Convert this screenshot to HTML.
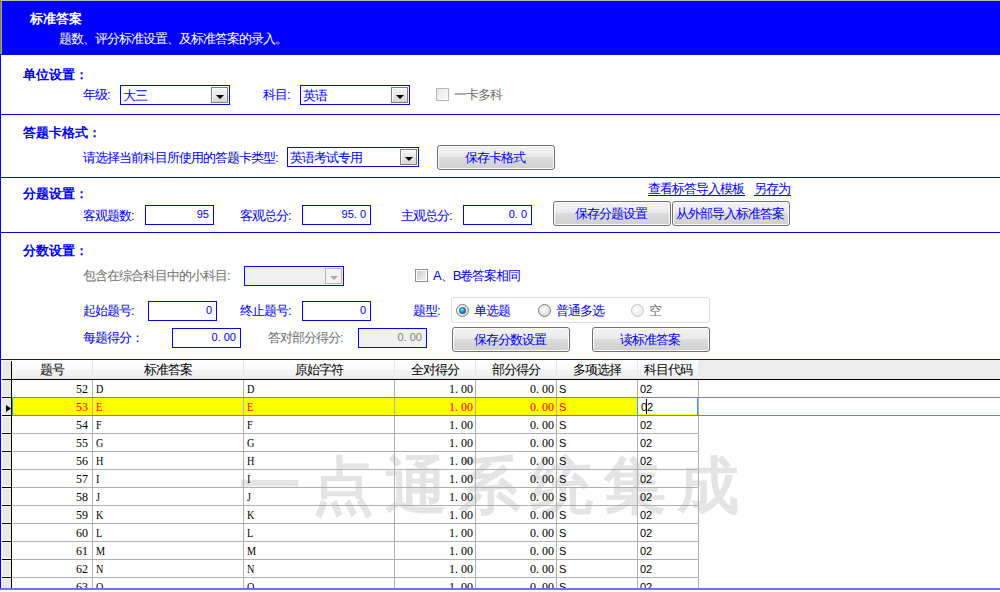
<!DOCTYPE html><html><head><meta charset="utf-8"><style>
html,body{margin:0;padding:0;background:#fff;}
body{width:1000px;height:592px;overflow:hidden;position:relative;font-family:"Liberation Sans",sans-serif;font-size:12px;}
div,span{position:absolute;}
.t{line-height:12px;white-space:nowrap;font-size:13px;letter-spacing:-1px;color:#0000ff;}
.b{line-height:12px;white-space:nowrap;font-size:13px;color:#0000ff;font-weight:bold;letter-spacing:0px;}
.g{line-height:12px;white-space:nowrap;font-size:13px;letter-spacing:-1px;color:#6d6d6d;}
.num{line-height:12px;white-space:nowrap;font-family:"Liberation Sans",sans-serif;font-size:11px;}
.num i{position:static;font-style:normal;letter-spacing:3px;}
.btn{box-sizing:border-box;border:1px solid #707070;border-radius:3px;background:linear-gradient(#f2f2f2 0%,#ebebeb 45%,#dddddd 50%,#cfcfcf 100%);box-shadow:inset 0 0 0 1px #fcfcfc;text-align:center;}
.btn span{position:static;display:block;line-height:12px;margin-top:6px;margin-left:-2px;color:#0000ff;white-space:nowrap;font-size:13px;letter-spacing:-1px;}
.gh{line-height:12px;white-space:nowrap;font-size:13px;letter-spacing:-1px;color:#000;text-align:center;}
.gd{line-height:12px;white-space:nowrap;font-family:"Liberation Serif",serif;font-size:12px;color:#000;}
.t,.g{margin-left:-1px;}
.b{margin-left:-1px;margin-top:1px;}
.gd i{position:static;font-style:normal;letter-spacing:3px;}
.gl{line-height:12px;white-space:nowrap;font-family:"Liberation Serif",serif;font-size:12px;color:#000;transform:scaleX(0.85);transform-origin:0 0;}
.gs{line-height:12px;white-space:nowrap;font-family:"Liberation Sans",sans-serif;font-size:11px;color:#000;}
</style></head><body>
<div style="left:0px;top:0px;width:1000px;height:1px;background:#bdbd9f"></div>
<div style="left:0px;top:0px;width:1px;height:54px;background:#7c7c6e"></div>
<div style="left:1px;top:1px;width:1px;height:53px;background:#a8a898"></div>
<div style="left:2px;top:1px;width:998px;height:54px;background:#0000ff"></div>
<div style="left:0px;top:54px;width:2px;height:1px;background:#0000ff"></div>
<div style="left:0px;top:54px;width:1px;height:535px;background:#0000ff"></div>
<div style="left:0px;top:114px;width:1000px;height:1px;background:#0000ff"></div>
<div style="left:0px;top:177px;width:1000px;height:1px;background:#0000ff"></div>
<div style="left:0px;top:232px;width:1000px;height:1px;background:#0000ff"></div>
<div style="left:0px;top:359px;width:1000px;height:1px;background:#0000ff"></div>
<span class="b" style="left:31px;top:12px;color:#fff">标准答案</span>
<span class="t" style="left:60px;top:33px;color:#fff">题数、评分标准设置、及标准答案的录入。</span>
<span class="b" style="left:24px;top:68px;">单位设置：</span>
<span class="t" style="left:84px;top:89px;">年级:</span>
<div style="left:120px;top:85px;width:110px;height:20px;border:1px solid #0000ff;box-sizing:border-box;background:#fff"></div>
<div style="left:211px;top:87px;width:17px;height:16px;border:1px solid #808080;box-sizing:border-box;background:linear-gradient(#f6f6f6,#d8d8d8);box-shadow:inset 1px 1px 0 #fff"></div>
<div style="left:216px;top:95px;width:0;height:0;border-left:4px solid transparent;border-right:4px solid transparent;border-top:4px solid #000"></div>
<span class="t" style="left:124px;top:90px;">大三</span>
<span class="t" style="left:264px;top:89px;">科目:</span>
<div style="left:300px;top:85px;width:110px;height:20px;border:1px solid #0000ff;box-sizing:border-box;background:#fff"></div>
<div style="left:391px;top:87px;width:17px;height:16px;border:1px solid #808080;box-sizing:border-box;background:linear-gradient(#f6f6f6,#d8d8d8);box-shadow:inset 1px 1px 0 #fff"></div>
<div style="left:396px;top:95px;width:0;height:0;border-left:4px solid transparent;border-right:4px solid transparent;border-top:4px solid #000"></div>
<span class="t" style="left:304px;top:90px;">英语</span>
<div style="left:436px;top:88px;width:13px;height:13px;border:1px solid #b8b8b8;box-sizing:border-box;background:linear-gradient(135deg,#e8e8e8,#fbfbfb)"></div>
<span class="g" style="left:455px;top:89px;">一卡多科</span>
<span class="b" style="left:24px;top:126px;">答题卡格式：</span>
<span class="t" style="left:84px;top:152px;">请选择当前科目所使用的答题卡类型:</span>
<div style="left:287px;top:147px;width:132px;height:20px;border:1px solid #0000ff;box-sizing:border-box;background:#fff"></div>
<div style="left:400px;top:149px;width:17px;height:16px;border:1px solid #808080;box-sizing:border-box;background:linear-gradient(#f6f6f6,#d8d8d8);box-shadow:inset 1px 1px 0 #fff"></div>
<div style="left:405px;top:157px;width:0;height:0;border-left:4px solid transparent;border-right:4px solid transparent;border-top:4px solid #000"></div>
<span class="t" style="left:291px;top:152px;">英语考试专用</span>
<div class="btn" style="left:437px;top:145px;width:118px;height:25px"><span>保存卡格式</span></div>
<span class="b" style="left:24px;top:187px;">分题设置：</span>
<span class="t" style="left:649px;top:183px">查看标答导入模板</span>
<span class="t" style="left:755px;top:183px">另存为</span>
<div style="left:648px;top:195px;width:97px;height:1px;background:#0000ff"></div>
<div style="left:754px;top:195px;width:37px;height:1px;background:#0000ff"></div>
<span class="t" style="left:84px;top:210px;">客观题数:</span>
<div style="left:145px;top:205px;width:69px;height:20px;border:1px solid #0000ff;box-sizing:border-box;background:#fff"></div>
<span class="num" style="left:145px;top:208px;width:64px;text-align:right;color:#0000ff">95</span>
<span class="t" style="left:241px;top:210px;">客观总分:</span>
<div style="left:302px;top:205px;width:69px;height:20px;border:1px solid #0000ff;box-sizing:border-box;background:#fff"></div>
<span class="num" style="left:302px;top:208px;width:64px;text-align:right;color:#0000ff">95<i>.</i>0</span>
<span class="t" style="left:402px;top:210px;">主观总分:</span>
<div style="left:463px;top:205px;width:69px;height:20px;border:1px solid #0000ff;box-sizing:border-box;background:#fff"></div>
<span class="num" style="left:463px;top:208px;width:64px;text-align:right;color:#0000ff">0<i>.</i>0</span>
<div class="btn" style="left:553px;top:201px;width:118px;height:25px"><span>保存分题设置</span></div>
<div class="btn" style="left:672px;top:201px;width:118px;height:25px"><span>从外部导入标准答案</span></div>
<span class="b" style="left:24px;top:244px;">分数设置：</span>
<span class="g" style="left:84px;top:270px;">包含在综合科目中的小科目:</span>
<div style="left:244px;top:266px;width:100px;height:20px;border:1px solid #0000ff;box-sizing:border-box;background:#f0f0f0"></div>
<div style="left:325px;top:268px;width:17px;height:16px;border:1px solid #b8b8b8;box-sizing:border-box;background:#f4f4f4"></div>
<div style="left:330px;top:276px;width:0;height:0;border-left:4px solid transparent;border-right:4px solid transparent;border-top:4px solid #a8a8a8"></div>
<div style="left:415px;top:269px;width:13px;height:13px;border:1px solid #8e8e8e;box-sizing:border-box;background:#fff"></div>
<div style="left:417px;top:271px;width:9px;height:9px;background:linear-gradient(135deg,#c8c8c8,#f6f6f6)"></div>
<span class="t" style="left:434px;top:270px;">A、B卷答案相同</span>
<span class="t" style="left:84px;top:305px;">起始题号:</span>
<div style="left:148px;top:301px;width:69px;height:20px;border:1px solid #0000ff;box-sizing:border-box;background:#fff"></div>
<span class="num" style="left:148px;top:304px;width:64px;text-align:right;color:#0000ff">0</span>
<span class="t" style="left:241px;top:305px;">终止题号:</span>
<div style="left:302px;top:301px;width:69px;height:20px;border:1px solid #0000ff;box-sizing:border-box;background:#fff"></div>
<span class="num" style="left:302px;top:304px;width:64px;text-align:right;color:#0000ff">0</span>
<span class="t" style="left:414px;top:305px;">题型:</span>
<div style="left:451px;top:297px;width:259px;height:26px;border:1px solid #d5dfe5;box-sizing:border-box;border-radius:3px"></div>
<div style="left:456px;top:304px;width:13px;height:13px;border:1px solid #7a7a7a;box-sizing:border-box;border-radius:50%;background:radial-gradient(circle at 40% 40%,#ffffff,#cfcfcf)"></div>
<div style="left:459px;top:307px;width:7px;height:7px;border-radius:50%;background:radial-gradient(circle at 45% 40%,#a8e4ff 0%,#2f8fc4 35%,#0c4670 85%)"></div>
<span class="t" style="left:475px;top:305px;">单选题</span>
<div style="left:538px;top:304px;width:13px;height:13px;border:1px solid #7a7a7a;box-sizing:border-box;border-radius:50%;background:radial-gradient(circle at 40% 40%,#ffffff,#cfcfcf)"></div>
<span class="t" style="left:557px;top:305px;">普通多选</span>
<div style="left:631px;top:304px;width:13px;height:13px;border:1px solid #c4c4c4;box-sizing:border-box;border-radius:50%;background:radial-gradient(circle at 40% 40%,#fdfdfd,#e6e6e6)"></div>
<span class="g" style="left:650px;top:305px;">空</span>
<span class="t" style="left:84px;top:332px;">每题得分：</span>
<div style="left:172px;top:328px;width:69px;height:20px;border:1px solid #0000ff;box-sizing:border-box;background:#fff"></div>
<span class="num" style="left:172px;top:331px;width:64px;text-align:right;color:#0000ff">0<i>.</i>00</span>
<span class="g" style="left:269px;top:332px;">答对部分得分:</span>
<div style="left:358px;top:328px;width:69px;height:20px;border:1px solid #0000ff;box-sizing:border-box;background:#f0f0f0"></div>
<span class="num" style="left:358px;top:331px;width:64px;text-align:right;color:#808080">0<i>.</i>00</span>
<div class="btn" style="left:452px;top:327px;width:118px;height:25px"><span>保存分数设置</span></div>
<div class="btn" style="left:592px;top:327px;width:118px;height:25px"><span>读标准答案</span></div>
<div style="left:1px;top:360px;width:698px;height:19px;background:linear-gradient(#ffffff 0%,#fcfcfc 45%,#f4f4f6 55%,#f0f0f2 85%,#e6e6e8 100%)"></div>
<div style="left:699px;top:360px;width:301px;height:19px;background:#ececec"></div>
<div style="left:92px;top:361px;width:1px;height:18px;background:#e6e6e6"></div>
<div style="left:243px;top:361px;width:1px;height:18px;background:#e6e6e6"></div>
<div style="left:394px;top:361px;width:1px;height:18px;background:#e6e6e6"></div>
<div style="left:475px;top:361px;width:1px;height:18px;background:#e6e6e6"></div>
<div style="left:556px;top:361px;width:1px;height:18px;background:#e6e6e6"></div>
<div style="left:637px;top:361px;width:1px;height:18px;background:#e6e6e6"></div>
<div style="left:698px;top:361px;width:1px;height:18px;background:#e6e6e6"></div>
<span class="gh" style="left:12px;top:364px;width:80px">题号</span>
<span class="gh" style="left:93px;top:364px;width:150px">标准答案</span>
<span class="gh" style="left:244px;top:364px;width:150px">原始字符</span>
<span class="gh" style="left:395px;top:364px;width:80px">全对得分</span>
<span class="gh" style="left:476px;top:364px;width:80px">部分得分</span>
<span class="gh" style="left:557px;top:364px;width:80px">多项选择</span>
<span class="gh" style="left:638px;top:364px;width:60px">科目代码</span>
<div style="left:1px;top:360px;width:10px;height:229px;background:#f4f4f4"></div>
<div style="left:2px;top:361px;width:9px;height:228px;background:#e9e9e9;box-shadow:inset 1px 0 0 #fafafa"></div>
<div style="left:2px;top:379px;width:998px;height:1px;background:#000"></div>
<div style="left:11px;top:361px;width:1px;height:228px;background:#000"></div>
<div style="left:6px;top:405px;width:5px;height:7px;background:#000;clip-path:polygon(0 0,100% 50%,0 100%)"></div>
<span style="left:239px;top:451px;font-size:62px;line-height:70px;font-weight:bold;color:#e4e4e4;letter-spacing:11px;white-space:nowrap">一点通系统集成</span>
<div style="left:12px;top:397px;width:687px;height:1px;background:#b0b0b0"></div>
<div style="left:2px;top:397px;width:9px;height:1px;background:#000"></div>
<div style="left:2px;top:396px;width:9px;height:1px;background:#fafafa"></div>
<div style="left:2px;top:398px;width:9px;height:1px;background:#fafafa"></div>
<span class="gd" style="left:12px;top:383px;width:76px;text-align:right;color:#000">52</span>
<span class="gl" style="left:96px;top:383px;color:#000">D</span>
<span class="gl" style="left:247px;top:383px;color:#000">D</span>
<span class="gd" style="left:395px;top:383px;width:78px;text-align:right;color:#000">1<i>.</i>00</span>
<span class="gd" style="left:476px;top:383px;width:78px;text-align:right;color:#000">0<i>.</i>00</span>
<span class="gs" style="left:559px;top:383px;color:#000">S</span>
<span class="gs" style="left:640px;top:383px;color:#000">02</span>
<div style="left:13px;top:398px;width:624px;height:17px;background:#ffff00"></div>
<div style="left:12px;top:415px;width:687px;height:1px;background:#b0b0b0"></div>
<div style="left:2px;top:415px;width:9px;height:1px;background:#000"></div>
<div style="left:2px;top:414px;width:9px;height:1px;background:#fafafa"></div>
<div style="left:2px;top:416px;width:9px;height:1px;background:#fafafa"></div>
<span class="gd" style="left:12px;top:401px;width:76px;text-align:right;color:#ff0000">53</span>
<span class="gl" style="left:96px;top:401px;color:#ff0000">E</span>
<span class="gl" style="left:247px;top:401px;color:#ff0000">E</span>
<span class="gd" style="left:395px;top:401px;width:78px;text-align:right;color:#ff0000">1<i>.</i>00</span>
<span class="gd" style="left:476px;top:401px;width:78px;text-align:right;color:#ff0000">0<i>.</i>00</span>
<span class="gs" style="left:559px;top:401px;color:#ff0000">S</span>
<div style="left:12px;top:433px;width:687px;height:1px;background:#b0b0b0"></div>
<div style="left:2px;top:433px;width:9px;height:1px;background:#000"></div>
<div style="left:2px;top:432px;width:9px;height:1px;background:#fafafa"></div>
<div style="left:2px;top:434px;width:9px;height:1px;background:#fafafa"></div>
<span class="gd" style="left:12px;top:419px;width:76px;text-align:right;color:#000">54</span>
<span class="gl" style="left:96px;top:419px;color:#000">F</span>
<span class="gl" style="left:247px;top:419px;color:#000">F</span>
<span class="gd" style="left:395px;top:419px;width:78px;text-align:right;color:#000">1<i>.</i>00</span>
<span class="gd" style="left:476px;top:419px;width:78px;text-align:right;color:#000">0<i>.</i>00</span>
<span class="gs" style="left:559px;top:419px;color:#000">S</span>
<span class="gs" style="left:640px;top:419px;color:#000">02</span>
<div style="left:12px;top:451px;width:687px;height:1px;background:#b0b0b0"></div>
<div style="left:2px;top:451px;width:9px;height:1px;background:#000"></div>
<div style="left:2px;top:450px;width:9px;height:1px;background:#fafafa"></div>
<div style="left:2px;top:452px;width:9px;height:1px;background:#fafafa"></div>
<span class="gd" style="left:12px;top:437px;width:76px;text-align:right;color:#000">55</span>
<span class="gl" style="left:96px;top:437px;color:#000">G</span>
<span class="gl" style="left:247px;top:437px;color:#000">G</span>
<span class="gd" style="left:395px;top:437px;width:78px;text-align:right;color:#000">1<i>.</i>00</span>
<span class="gd" style="left:476px;top:437px;width:78px;text-align:right;color:#000">0<i>.</i>00</span>
<span class="gs" style="left:559px;top:437px;color:#000">S</span>
<span class="gs" style="left:640px;top:437px;color:#000">02</span>
<div style="left:12px;top:469px;width:687px;height:1px;background:#b0b0b0"></div>
<div style="left:2px;top:469px;width:9px;height:1px;background:#000"></div>
<div style="left:2px;top:468px;width:9px;height:1px;background:#fafafa"></div>
<div style="left:2px;top:470px;width:9px;height:1px;background:#fafafa"></div>
<span class="gd" style="left:12px;top:455px;width:76px;text-align:right;color:#000">56</span>
<span class="gl" style="left:96px;top:455px;color:#000">H</span>
<span class="gl" style="left:247px;top:455px;color:#000">H</span>
<span class="gd" style="left:395px;top:455px;width:78px;text-align:right;color:#000">1<i>.</i>00</span>
<span class="gd" style="left:476px;top:455px;width:78px;text-align:right;color:#000">0<i>.</i>00</span>
<span class="gs" style="left:559px;top:455px;color:#000">S</span>
<span class="gs" style="left:640px;top:455px;color:#000">02</span>
<div style="left:12px;top:487px;width:687px;height:1px;background:#b0b0b0"></div>
<div style="left:2px;top:487px;width:9px;height:1px;background:#000"></div>
<div style="left:2px;top:486px;width:9px;height:1px;background:#fafafa"></div>
<div style="left:2px;top:488px;width:9px;height:1px;background:#fafafa"></div>
<span class="gd" style="left:12px;top:473px;width:76px;text-align:right;color:#000">57</span>
<span class="gl" style="left:96px;top:473px;color:#000">I</span>
<span class="gl" style="left:247px;top:473px;color:#000">I</span>
<span class="gd" style="left:395px;top:473px;width:78px;text-align:right;color:#000">1<i>.</i>00</span>
<span class="gd" style="left:476px;top:473px;width:78px;text-align:right;color:#000">0<i>.</i>00</span>
<span class="gs" style="left:559px;top:473px;color:#000">S</span>
<span class="gs" style="left:640px;top:473px;color:#000">02</span>
<div style="left:12px;top:505px;width:687px;height:1px;background:#b0b0b0"></div>
<div style="left:2px;top:505px;width:9px;height:1px;background:#000"></div>
<div style="left:2px;top:504px;width:9px;height:1px;background:#fafafa"></div>
<div style="left:2px;top:506px;width:9px;height:1px;background:#fafafa"></div>
<span class="gd" style="left:12px;top:491px;width:76px;text-align:right;color:#000">58</span>
<span class="gl" style="left:96px;top:491px;color:#000">J</span>
<span class="gl" style="left:247px;top:491px;color:#000">J</span>
<span class="gd" style="left:395px;top:491px;width:78px;text-align:right;color:#000">1<i>.</i>00</span>
<span class="gd" style="left:476px;top:491px;width:78px;text-align:right;color:#000">0<i>.</i>00</span>
<span class="gs" style="left:559px;top:491px;color:#000">S</span>
<span class="gs" style="left:640px;top:491px;color:#000">02</span>
<div style="left:12px;top:523px;width:687px;height:1px;background:#b0b0b0"></div>
<div style="left:2px;top:523px;width:9px;height:1px;background:#000"></div>
<div style="left:2px;top:522px;width:9px;height:1px;background:#fafafa"></div>
<div style="left:2px;top:524px;width:9px;height:1px;background:#fafafa"></div>
<span class="gd" style="left:12px;top:509px;width:76px;text-align:right;color:#000">59</span>
<span class="gl" style="left:96px;top:509px;color:#000">K</span>
<span class="gl" style="left:247px;top:509px;color:#000">K</span>
<span class="gd" style="left:395px;top:509px;width:78px;text-align:right;color:#000">1<i>.</i>00</span>
<span class="gd" style="left:476px;top:509px;width:78px;text-align:right;color:#000">0<i>.</i>00</span>
<span class="gs" style="left:559px;top:509px;color:#000">S</span>
<span class="gs" style="left:640px;top:509px;color:#000">02</span>
<div style="left:12px;top:541px;width:687px;height:1px;background:#b0b0b0"></div>
<div style="left:2px;top:541px;width:9px;height:1px;background:#000"></div>
<div style="left:2px;top:540px;width:9px;height:1px;background:#fafafa"></div>
<div style="left:2px;top:542px;width:9px;height:1px;background:#fafafa"></div>
<span class="gd" style="left:12px;top:527px;width:76px;text-align:right;color:#000">60</span>
<span class="gl" style="left:96px;top:527px;color:#000">L</span>
<span class="gl" style="left:247px;top:527px;color:#000">L</span>
<span class="gd" style="left:395px;top:527px;width:78px;text-align:right;color:#000">1<i>.</i>00</span>
<span class="gd" style="left:476px;top:527px;width:78px;text-align:right;color:#000">0<i>.</i>00</span>
<span class="gs" style="left:559px;top:527px;color:#000">S</span>
<span class="gs" style="left:640px;top:527px;color:#000">02</span>
<div style="left:12px;top:559px;width:687px;height:1px;background:#b0b0b0"></div>
<div style="left:2px;top:559px;width:9px;height:1px;background:#000"></div>
<div style="left:2px;top:558px;width:9px;height:1px;background:#fafafa"></div>
<div style="left:2px;top:560px;width:9px;height:1px;background:#fafafa"></div>
<span class="gd" style="left:12px;top:545px;width:76px;text-align:right;color:#000">61</span>
<span class="gl" style="left:96px;top:545px;color:#000">M</span>
<span class="gl" style="left:247px;top:545px;color:#000">M</span>
<span class="gd" style="left:395px;top:545px;width:78px;text-align:right;color:#000">1<i>.</i>00</span>
<span class="gd" style="left:476px;top:545px;width:78px;text-align:right;color:#000">0<i>.</i>00</span>
<span class="gs" style="left:559px;top:545px;color:#000">S</span>
<span class="gs" style="left:640px;top:545px;color:#000">02</span>
<div style="left:12px;top:577px;width:687px;height:1px;background:#b0b0b0"></div>
<div style="left:2px;top:577px;width:9px;height:1px;background:#000"></div>
<div style="left:2px;top:576px;width:9px;height:1px;background:#fafafa"></div>
<div style="left:2px;top:578px;width:9px;height:1px;background:#fafafa"></div>
<span class="gd" style="left:12px;top:563px;width:76px;text-align:right;color:#000">62</span>
<span class="gl" style="left:96px;top:563px;color:#000">N</span>
<span class="gl" style="left:247px;top:563px;color:#000">N</span>
<span class="gd" style="left:395px;top:563px;width:78px;text-align:right;color:#000">1<i>.</i>00</span>
<span class="gd" style="left:476px;top:563px;width:78px;text-align:right;color:#000">0<i>.</i>00</span>
<span class="gs" style="left:559px;top:563px;color:#000">S</span>
<span class="gs" style="left:640px;top:563px;color:#000">02</span>
<span class="gd" style="left:12px;top:581px;width:76px;text-align:right;color:#000">63</span>
<span class="gl" style="left:96px;top:581px;color:#000">O</span>
<span class="gl" style="left:247px;top:581px;color:#000">O</span>
<span class="gd" style="left:395px;top:581px;width:78px;text-align:right;color:#000">1<i>.</i>00</span>
<span class="gd" style="left:476px;top:581px;width:78px;text-align:right;color:#000">0<i>.</i>00</span>
<span class="gs" style="left:559px;top:581px;color:#000">S</span>
<span class="gs" style="left:640px;top:581px;color:#000">02</span>
<div style="left:92px;top:380px;width:1px;height:209px;background:#b0b0b0"></div>
<div style="left:243px;top:380px;width:1px;height:209px;background:#b0b0b0"></div>
<div style="left:394px;top:380px;width:1px;height:209px;background:#b0b0b0"></div>
<div style="left:475px;top:380px;width:1px;height:209px;background:#b0b0b0"></div>
<div style="left:556px;top:380px;width:1px;height:209px;background:#b0b0b0"></div>
<div style="left:637px;top:380px;width:1px;height:209px;background:#b0b0b0"></div>
<div style="left:698px;top:380px;width:1px;height:209px;background:#b0b0b0"></div>
<div style="left:12px;top:397px;width:988px;height:1px;background:#3399ff"></div>
<div style="left:12px;top:415px;width:988px;height:1px;background:#3399ff"></div>
<div style="left:12px;top:397px;width:1px;height:19px;background:#3399ff"></div>
<div style="left:637px;top:397px;width:61px;height:19px;border:1px solid #3399ff;box-sizing:border-box;background:#fff;box-shadow:inset 0 -1px 0 #ffff00"></div>
<span class="gs" style="left:641px;top:401px;color:#000">02</span>
<div style="left:646px;top:399px;width:1px;height:15px;background:#000"></div>
<div style="left:0px;top:588px;width:1000px;height:2px;background:#7070ff"></div>
<div style="left:0px;top:590px;width:1000px;height:2px;background:#fff"></div>
</body></html>
